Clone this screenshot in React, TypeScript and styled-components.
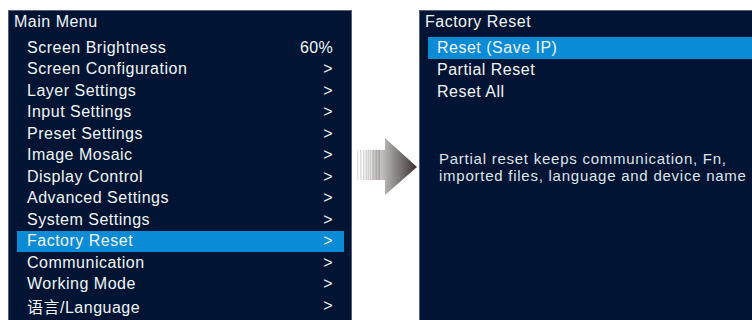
import React from "react";
import styled, { createGlobalStyle } from "styled-components";

const GlobalStyle = createGlobalStyle`
  html, body {
    margin: 0;
    padding: 0;
    background: #ffffff;
  }
  body {
    font-family: "Liberation Sans", Arial, "Noto Sans CJK SC", sans-serif;
  }
`;

const Page = styled.div`
  width: 752px;
  height: 320px;
  overflow: hidden;
  display: flex;
  align-items: flex-start;
  padding-top: 10px;
  box-sizing: border-box;
`;

const Panel = styled.div<{ $width: number; $left: number }>`
  flex: none;
  width: ${(p) => p.$width}px;
  margin-left: ${(p) => p.$left}px;
  height: 320px;
  box-sizing: border-box;
  background: #011433;
  border: 1px solid #55607a;
  color: #f2f4f7;
  font-size: 16px;
  letter-spacing: 0.5px;
`;

const Title = styled.div`
  height: 22px;
  line-height: 22px;
  padding-left: 5px;
  margin-bottom: 4px;
  white-space: nowrap;
`;

const MenuList = styled.div<{ $rowHeight: number }>`
  display: grid;
  grid-auto-rows: ${(p) => p.$rowHeight}px;
`;

const Row = styled.div<{ $active?: boolean; $inset: number }>`
  display: flex;
  align-items: center;
  justify-content: space-between;
  margin: 0 7px 0 8px;
  padding: 0 11px 0 ${(p) => p.$inset}px;
  white-space: nowrap;
  background: ${(p) => (p.$active ? "#0a8bd6" : "transparent")};
`;

const Value = styled.span`
  letter-spacing: 0.3px;
`;

const Note = styled.div`
  margin-top: 47px;
  padding-left: 19px;
  font-size: 15px;
  line-height: 17px;
  letter-spacing: 0.75px;
  color: #dfe3ea;
  white-space: nowrap;
`;

const ArrowSlot = styled.div`
  flex: none;
  width: 67px;
  padding: 128px 0 0 5px;
  box-sizing: border-box;
`;

const mainItems: [string, string][] = [
  ["Screen Brightness", "60%"],
  ["Screen Configuration", ">"],
  ["Layer Settings", ">"],
  ["Input Settings", ">"],
  ["Preset Settings", ">"],
  ["Image Mosaic", ">"],
  ["Display Control", ">"],
  ["Advanced Settings", ">"],
  ["System Settings", ">"],
  ["Factory Reset", ">"],
  ["Communication", ">"],
  ["Working Mode", ">"],
  ["语言/Language", ">"],
];

const resetItems = ["Reset (Save IP)", "Partial Reset", "Reset All"];

const Arrow = () => {
  // striped tail that fades to white on the left
  const stripes = [0, 3, 6, 8.5, 10.5, 12.5, 14.5, 16, 17.5, 19, 20.5, 22];
  return (
    <svg width="60" height="57" viewBox="0 0 60 57">
      <defs>
        <linearGradient id="arrowFill" x1="0" y1="0" x2="1" y2="0">
          <stop offset="0" stopColor="#c9c5c4" />
          <stop offset="0.4" stopColor="#8f8a89" />
          <stop offset="1" stopColor="#3a312e" />
        </linearGradient>
      </defs>
      {stripes.map((x, i) => (
        <rect
          key={x}
          x={x}
          y={12}
          width={1.4}
          height={30}
          fill="#8d8888"
          opacity={0.25 + (i / stripes.length) * 0.6}
        />
      ))}
      <path d="M23 12 H28 V0 L60 29 L28 57 V42 H23 Z" fill="url(#arrowFill)" />
    </svg>
  );
};

export default function App() {
  return (
    <>
      <GlobalStyle />
      <Page>
        <Panel $width={344} $left={8}>
          <Title>Main Menu</Title>
          <MenuList $rowHeight={21.5}>
            {mainItems.map(([label, value]) => (
              <Row key={label} $inset={10} $active={label === "Factory Reset"}>
                <span>{label}</span>
                <Value>{value}</Value>
              </Row>
            ))}
          </MenuList>
        </Panel>
        <ArrowSlot>
          <Arrow />
        </ArrowSlot>
        <Panel $width={345} $left={0}>
          <Title>Factory Reset</Title>
          <MenuList $rowHeight={22}>
            {resetItems.map((label, i) => (
              <Row key={label} $inset={9} $active={i === 0}>
                <span>{label}</span>
              </Row>
            ))}
          </MenuList>
          <Note>
            Partial reset keeps communication, Fn,
            <br />
            imported files, language and device name
          </Note>
        </Panel>
      </Page>
    </>
  );
}
